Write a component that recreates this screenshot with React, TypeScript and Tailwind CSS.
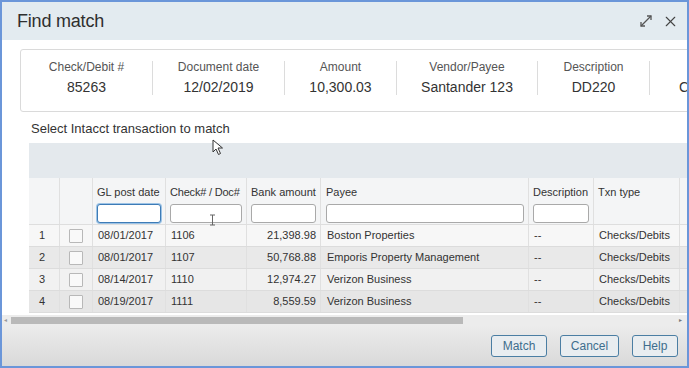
import { X } from "lucide-react";

const SUMMARY = [
  { label: "Check/Debit #", value: "85263", w: "w-[132px]" },
  { label: "Document date", value: "12/02/2019", w: "w-[132px]" },
  { label: "Amount", value: "10,300.03", w: "w-[112px]" },
  { label: "Vendor/Payee", value: "Santander 123", w: "w-[141px]" },
  { label: "Description", value: "DD220", w: "w-[112px]" },
];

const ROWS = [
  { n: 1, date: "08/01/2017", doc: "1106", amt: "21,398.98", payee: "Boston Properties", bg: "bg-[#f7f7f7]" },
  { n: 2, date: "08/01/2017", doc: "1107", amt: "50,768.88", payee: "Emporis Property Management", bg: "bg-[#e9e9e9]" },
  { n: 3, date: "08/14/2017", doc: "1110", amt: "12,974.27", payee: "Verizon Business", bg: "bg-[#f1f1f1]" },
  { n: 4, date: "08/19/2017", doc: "1111", amt: "8,559.59", payee: "Verizon Business", bg: "bg-[#e6e6e6]" },
];

function FilterInput({ w, active }: { w: string; active?: boolean }) {
  return (
    <div
      className={`${w} h-[19px] rounded-[3px] bg-white border ${
        active ? "border-[#3d7bb6] shadow-[0_0_0_1px_#9cc3e6]" : "border-[#a9a9a9]"
      }`}
    />
  );
}

export default function App() {
  return (
    <div
      className="relative w-[689px] h-[368px] overflow-hidden border-2 border-[#6b96d9] flex flex-col text-[#333]"
      style={{ fontFamily: '"Liberation Sans", Arial, sans-serif' }}
    >
      {/* TITLE BAR */}
      <div className="h-[38px] shrink-0 bg-[#e3ebf0] flex items-center justify-between pl-[15px] pr-[8px]">
        <span className="text-[18px] text-[#2f2f2f] tracking-[-0.2px]">Find match</span>
        <div className="flex items-center gap-[8px] text-[#444]">
          <svg width="16" height="16" viewBox="0 0 16 16" fill="none" stroke="#555" strokeWidth="1.3">
            <path d="M3 13 L13 3" />
            <path d="M9 3 H13 V7" />
            <path d="M3 9 V13 H7" />
          </svg>
          <X size={17} strokeWidth={1.6} />
        </div>
      </div>

      {/* BODY */}
      <div className="flex-1 bg-white flex flex-col">
        {/* SUMMARY CARD */}
        <div className="ml-[18px] mt-[9px] h-[63px] w-[700px] shrink-0 border border-[#dadada] rounded-[3px] flex items-start pt-[11px]">
          {SUMMARY.map((s) => (
            <div
              key={s.label}
              className={`${s.w} shrink-0 h-[34px] flex flex-col items-center gap-[7px] border-r border-[#dcdcdc]`}
            >
              <span className="text-[12px] leading-[12px] text-[#555] whitespace-nowrap">{s.label}</span>
              <span className="text-[14px] leading-[14px] text-[#333] whitespace-nowrap">{s.value}</span>
            </div>
          ))}
          <div className="shrink-0 h-[34px] pl-[29px] flex flex-col gap-[7px]">
            <span className="h-[12px]" />
            <span className="text-[14px] leading-[14px] text-[#333]">C</span>
          </div>
        </div>

        <div className="ml-[29px] mt-[9px] text-[13px] leading-[15px] text-[#333]">
          Select Intacct transaction to match
        </div>

        {/* TABLE */}
        <div className="ml-[27px] mt-[7px] w-[680px] shrink-0">
          <div className="h-[35px] bg-[#e4e9ed]" />
          <div className="flex h-[47px] bg-[#f4f5f6] border-b border-[#dedede] text-[11px] text-[#333] whitespace-nowrap">
            <div className="w-[31px] border-r border-[#e0e0e0]" />
            <div className="w-[33px] border-r border-[#e0e0e0]" />
            <div className="w-[73px] border-r border-[#e0e0e0] px-[4px] pt-[6px] flex flex-col gap-[3px]">
              <span>GL post date</span>
              <FilterInput w="w-[64px]" active />
            </div>
            <div className="w-[81px] border-r border-[#e0e0e0] px-[4px] pt-[6px] flex flex-col gap-[3px]">
              <span className="tracking-[-0.2px]">Check# / Doc#</span>
              <FilterInput w="w-[72px]" />
            </div>
            <div className="w-[74px] border-r border-[#e0e0e0] px-[4px] pt-[6px] flex flex-col gap-[3px]">
              <span>Bank amount</span>
              <FilterInput w="w-[65px]" />
            </div>
            <div className="w-[208px] border-r border-[#e0e0e0] px-[5px] pt-[6px] flex flex-col gap-[3px]">
              <span>Payee</span>
              <FilterInput w="w-[198px]" />
            </div>
            <div className="w-[65px] border-r border-[#e0e0e0] px-[4px] pt-[6px] flex flex-col gap-[3px]">
              <span>Description</span>
              <FilterInput w="w-[56px]" />
            </div>
            <div className="w-[86px] border-r border-[#e0e0e0] px-[4px] pt-[6px]">
              <span>Txn type</span>
            </div>
            <div className="flex-1" />
          </div>

          {ROWS.map((r) => (
            <div
              key={r.n}
              className={`flex h-[22px] items-center ${r.bg} border-b border-[#dcdcdc] text-[11px] text-[#333] whitespace-nowrap`}
            >
              <div className="w-[31px] h-full flex items-center pl-[10px] border-r border-[#e0e0e0]">{r.n}</div>
              <div className="w-[33px] h-full flex items-center justify-center border-r border-[#e0e0e0]">
                <div className="w-[14px] h-[14px] border border-[#b8b8b8] bg-[#f9f9f9] rounded-[1px]" />
              </div>
              <div className="w-[73px] h-full flex items-center px-[5px] border-r border-[#e0e0e0]">{r.date}</div>
              <div className="w-[81px] h-full flex items-center px-[5px] border-r border-[#e0e0e0]">{r.doc}</div>
              <div className="w-[74px] h-full flex items-center justify-end px-[4px] border-r border-[#e0e0e0]">{r.amt}</div>
              <div className="w-[208px] h-full flex items-center px-[6px] border-r border-[#e0e0e0]">{r.payee}</div>
              <div className="w-[65px] h-full flex items-center px-[5px] border-r border-[#e0e0e0]">--</div>
              <div className="w-[86px] h-full flex items-center px-[5px] border-r border-[#e0e0e0]">Checks/Debits</div>
              <div className="flex-1" />
            </div>
          ))}
        </div>

        {/* SCROLLBAR */}
        <div className="mt-[2px] h-[10px] shrink-0 bg-[#ececec] flex items-center px-[2px]">
          <span className="text-[6px] text-[#999] w-[6px]">◂</span>
          <div className="h-[7px] w-[452px] bg-[#b9b9b9] ml-[1px]" />
          <div className="flex-1" />
          <span className="text-[6px] text-[#777] w-[6px]">▸</span>
        </div>

        {/* FOOTER */}
        <div className="flex-1 bg-gradient-to-b from-[#ececec] to-[#d9d9d9] flex items-start justify-end gap-[13px] pr-[9px] pt-[10px]">
          {["Match", "Cancel", "Help"].map((b) => (
            <button
              key={b}
              className={`h-[22px] rounded-[3px] border border-[#4b7ea3] bg-[#e9edf0] text-[12px] text-[#3e6d8d] ${
                b === "Match" ? "w-[56px]" : b === "Cancel" ? "w-[59px]" : "w-[46px]"
              }`}
            >
              {b}
            </button>
          ))}
        </div>
      </div>

      {/* MOUSE POINTER */}
      <svg className="absolute left-[210px] top-[137px]" width="12" height="17" viewBox="0 0 12 17">
        <path d="M1 1 L1 13 L4 10 L6.5 15.5 L8.5 14.5 L6 9 L10.5 9 Z" fill="#fff" stroke="#333" strokeWidth="1" />
      </svg>
      {/* I-BEAM */}
      <svg className="absolute left-[207px] top-[212px]" width="7" height="12" viewBox="0 0 7 12">
        <path d="M1 1 H6 M3.5 1 V11 M1 11 H6" stroke="#666" strokeWidth="1" fill="none" />
      </svg>
    </div>
  );
}
